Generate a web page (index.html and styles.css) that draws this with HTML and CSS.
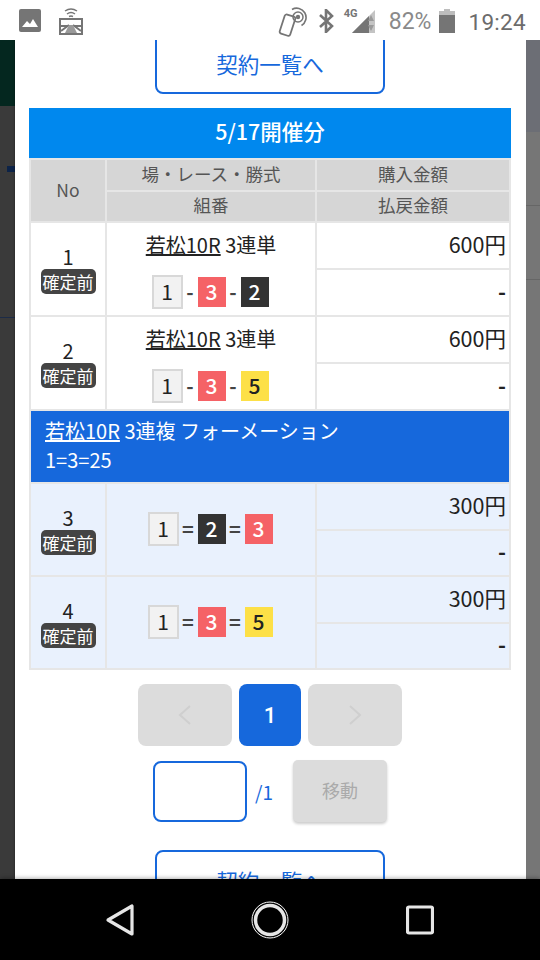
FILE: index.html
```html
<html>
    <head>
        <meta name="viewport" content="width=device-width, initial-scale=1">
        <title>契約一覧</title>
        <link rel="stylesheet" href="styles.css">
    </head>
    <body>
        <div class="screen">
            <div class="status-bar">
                <svg class="ic-picture" width="22" height="23" viewBox="0 0 22 23">
                    <rect width="22" height="23" rx="2" fill="#757575"/>
                    <path d="M3 18l5-6 3 3 3-5 5 8z" fill="#fff"/>
                </svg>
                <svg class="ic-cast" width="24" height="28" viewBox="0 0 24 28">
                    <path d="M6 4q6-4 12 0M8 7q4-3 8 0M10 9.500q2-1 4 0" fill="none" stroke="#757575" stroke-width="1.500"/>
                    <rect x="1" y="12" width="22" height="15" fill="#fff" stroke="#757575" stroke-width="2"/>
                    <path d="M2 24l8-6M22 24l-8-6M2 19h8M22 19h-8" stroke="#757575" stroke-width="2" fill="none"/>
                    <path d="M10 18h4l4 8H6z" fill="#9a9a9a"/>
                </svg>
                <div class="status-right">
                    <svg class="ic-nfc" width="30" height="30" viewBox="0 0 30 30">
                        <rect x="4" y="8" width="11" height="20" rx="2" transform="rotate(18 9 18)" fill="#fff" stroke="#757575" stroke-width="1.800"/>
                        <circle cx="20" cy="10" r="2.200" fill="#757575"/>
                        <circle cx="20" cy="10" r="5" fill="none" stroke="#757575" stroke-width="1.500"/>
                        <path d="M14 2.500a9 9 0 0 1 9.500 16" fill="none" stroke="#757575" stroke-width="1.600"/>
                    </svg>
                    <svg class="ic-bt" width="15" height="24" viewBox="0 0 15 24">
                        <path d="M1 6l12 11-6 6V1l6 6L1 18" fill="none" stroke="#757575" stroke-width="2.600"/>
                    </svg>
                    <div class="signal">
                        <span class="net">4G</span>
                        <svg width="31" height="24" viewBox="0 0 31 24">
                            <path d="M8 24L31 1v23z" fill="#c4c4c4"/>
                            <path d="M8 24l17-17v17z" fill="#757575"/>
                            <path d="M27 6l3 6h-6zM27 22l3-6h-6z" fill="#9a9a9a"/>
                        </svg>
                    </div>
                    <span class="battery-text">82%</span>
                    <svg class="ic-battery" width="16" height="24" viewBox="0 0 16 24">
                        <path d="M5 0h6v2h5v6H0V2h5z" fill="#bdbdbd"/>
                        <rect y="6" width="16" height="18" fill="#757575"/>
                    </svg>
                    <span class="clock">19:24</span>
                </div>
            </div>

            <div class="main">
                <div class="side side-left">
                    <div class="left-top"></div>
                    <div class="left-mid"><div class="left-mark"></div></div>
                </div>

                <div class="modal">
                    <div class="list-link-box"><a class="list-link">契約一覧へ</a></div>
                    <div class="date-title">5/17開催分</div>
                    <table class="bet-table">
                        <colgroup>
                            <col class="col-no">
                            <col class="col-bet">
                            <col class="col-money">
                        </colgroup>
                        <tr class="head-row">
                            <th rowspan="2">No</th>
                            <th>場・レース・勝式</th>
                            <th>購入金額</th>
                        </tr>
                        <tr class="head-row">
                            <th>組番</th>
                            <th>払戻金額</th>
                        </tr>

                        <tr class="money-row">
                            <td rowspan="2" class="no-cell">1<span class="badge">確定前</span></td>
                            <td rowspan="2" class="bet-cell">
                                <div class="race-name"><u>若松10R</u> 3連単</div>
                                <div class="numbers">
                                    <span class="num num-white">1</span><span class="sep">-</span><span class="num num-red">3</span><span class="sep">-</span><span class="num num-black">2</span>
                                </div>
                            </td>
                            <td class="money">600円</td>
                        </tr>
                        <tr class="money-row"><td class="money money-empty">-</td></tr>

                        <tr class="money-row">
                            <td rowspan="2" class="no-cell">2<span class="badge">確定前</span></td>
                            <td rowspan="2" class="bet-cell">
                                <div class="race-name"><u>若松10R</u> 3連単</div>
                                <div class="numbers">
                                    <span class="num num-white">1</span><span class="sep">-</span><span class="num num-red">3</span><span class="sep">-</span><span class="num num-yellow">5</span>
                                </div>
                            </td>
                            <td class="money">600円</td>
                        </tr>
                        <tr class="money-row"><td class="money money-empty">-</td></tr>

                        <tr>
                            <td colspan="3" class="formation"><u>若松10R</u> 3連複 フォーメーション<br>1=3=25</td>
                        </tr>

                        <tr class="money-row blue-row">
                            <td rowspan="2" class="no-cell">3<span class="badge">確定前</span></td>
                            <td rowspan="2" class="bet-cell">
                                <div class="numbers numbers-eq">
                                    <span class="num num-white">1</span><span class="sep">=</span><span class="num num-black">2</span><span class="sep">=</span><span class="num num-red">3</span>
                                </div>
                            </td>
                            <td class="money">300円</td>
                        </tr>
                        <tr class="money-row blue-row"><td class="money money-empty">-</td></tr>

                        <tr class="money-row blue-row">
                            <td rowspan="2" class="no-cell">4<span class="badge">確定前</span></td>
                            <td rowspan="2" class="bet-cell">
                                <div class="numbers numbers-eq">
                                    <span class="num num-white">1</span><span class="sep">=</span><span class="num num-red">3</span><span class="sep">=</span><span class="num num-yellow">5</span>
                                </div>
                            </td>
                            <td class="money">300円</td>
                        </tr>
                        <tr class="money-row blue-row"><td class="money money-empty">-</td></tr>
                    </table>

                    <div class="pager">
                        <div class="page-arrow">
                            <svg width="16" height="22" viewBox="0 0 16 22"><path d="M13 2L3 11l10 9" fill="none" stroke="#cfcfcf" stroke-width="2"/></svg>
                        </div>
                        <div class="page-current">1</div>
                        <div class="page-arrow">
                            <svg width="16" height="22" viewBox="0 0 16 22"><path d="M3 2l10 9-10 9" fill="none" stroke="#cfcfcf" stroke-width="2"/></svg>
                        </div>
                    </div>

                    <div class="page-jump">
                        <div class="page-input"></div>
                        <span class="page-total">/1</span>
                        <div class="move-button">移動</div>
                    </div>

                    <div class="list-link-box list-link-bottom"><a class="list-link">契約一覧へ</a></div>
                </div>

                <div class="side side-right">
                    <div class="right-a"></div>
                    <div class="right-b"></div>
                    <div class="right-c"></div>
                </div>
            </div>

            <div class="nav-bar">
                <div class="nav-item">
                    <svg width="30" height="34" viewBox="0 0 30 34"><path d="M3 17L27 3v28z" fill="none" stroke="#e6e6e6" stroke-width="3.200" stroke-linejoin="round"/></svg>
                </div>
                <div class="nav-item">
                    <svg width="38" height="38" viewBox="0 0 38 38">
                        <circle cx="19" cy="19" r="14.500" fill="none" stroke="#e6e6e6" stroke-width="3.500"/>
                        <circle cx="19" cy="19" r="18" fill="none" stroke="#fff" stroke-width="1"/>
                    </svg>
                </div>
                <div class="nav-item">
                    <svg width="28" height="30" viewBox="0 0 28 30"><rect x="1.500" y="2" width="25" height="26" rx="1.500" fill="none" stroke="#e6e6e6" stroke-width="3.200"/></svg>
                </div>
            </div>
        </div>
    </body>
</html>
```

FILE: styles.css
```css
* {
    box-sizing: border-box;
}
body {
    margin: 0;
    font-family: "Noto Sans CJK JP", "Noto Sans", sans-serif;
    color: #222;
}
.screen {
    width: 540px;
    height: 960px;
    display: flex;
    flex-direction: column;
    overflow: hidden;
}

/* status bar */
.status-bar {
    height: 40px;
    flex: none;
    display: flex;
    align-items: flex-start;
    padding: 9px 14px 0 19px;
    background: #fff;
    font-family: Roboto, sans-serif;
    color: #757575;
}
.ic-cast {
    margin-left: 18px;
    margin-top: -2px;
}
.status-right {
    margin-left: auto;
    display: flex;
    align-items: flex-start;
}
.ic-nfc {
    margin-top: -2px;
}
.ic-bt {
    margin-left: 11px;
}
.signal {
    margin-left: 10px;
    position: relative;
    width: 31px;
    height: 24px;
}
.net {
    position: absolute;
    left: 0;
    top: -2px;
    font-size: 11px;
    font-weight: 700;
}
.battery-text {
    margin-left: 14px;
    font-size: 23px;
    line-height: 26px;
    color: #8a8a8a;
}
.ic-battery {
    margin-left: 8px;
}
.clock {
    margin-left: 13px;
    font-size: 22.500px;
    line-height: 26px;
    color: #6c6c6c;
    letter-spacing: .3px;
}

/* backdrop and modal */
.main {
    flex: 1;
    min-height: 0;
    display: flex;
    overflow: hidden;
}
.side {
    flex: none;
}
.side-left {
    width: 15px;
    background: #3a3a3a;
}
.left-top {
    height: 66px;
    background: #04271f;
}
.left-mid {
    height: 212px;
    padding: 60px 0 0 7px;
    border-bottom: 1px solid #1c2b47;
}
.left-mark {
    height: 6px;
    background: #0c2348;
}
.side-right {
    width: 14px;
    background: #767676;
}
.right-a {
    height: 92px;
    background: #6c6e75;
}
.right-b,
.right-c {
    height: 74px;
    border-bottom: 1px solid #666;
}
.modal {
    width: 511px;
    flex: none;
    background: #fff;
    padding: 0 15px 0 14px;
    box-shadow: 0 0 2px rgba(0, 0, 0, .5);
}
.list-link-box {
    display: flex;
    justify-content: center;
    margin-top: -7px;
}
.list-link {
    width: 230px;
    height: 61px;
    display: flex;
    align-items: center;
    justify-content: center;
    border: 2px solid #1668dc;
    border-radius: 8px;
    color: #1668dc;
    font-size: 21.500px;
}
.list-link-bottom {
    margin-top: 28px;
}
.date-title {
    margin-top: 14px;
    height: 50px;
    line-height: 46px;
    background: #0088ee;
    color: #fff;
    text-align: center;
    font-size: 21.500px;
    font-weight: 500;
}

/* table */
.bet-table {
    width: 482px;
    table-layout: fixed;
    border-collapse: collapse;
    font-size: 20px;
}
.col-no {
    width: 76px;
}
.col-bet {
    width: 210px;
}
.bet-table th,
.bet-table td {
    border: 2px solid #e6e6e6;
    padding: 0;
}
.bet-table th {
    background: #d6d6d6;
    color: #555;
    font-weight: 400;
    font-size: 17.500px;
    height: 31.500px;
    line-height: 20px;
    padding-bottom: 2px;
}
.money-row {
    height: 47px;
}
.blue-row {
    height: 46.500px;
    background: #e9f1fd;
}
.no-cell {
    text-align: center;
    font-size: 20px;
    line-height: 25px;
}
.badge {
    display: block;
    width: 55px;
    margin: 0 auto;
    background: #444;
    color: #fff;
    border-radius: 5px;
    font-size: 17px;
    line-height: 25px;
}
.bet-cell {
    text-align: center;
}
.race-name {
    line-height: 30px;
}
.numbers {
    margin-top: 15px;
    padding-right: 2px;
    display: flex;
    align-items: center;
    justify-content: center;
}
.numbers-eq {
    margin-top: -2px;
}
.num {
    width: 28px;
    height: 30px;
    line-height: 29px;
    font-size: 21px;
    font-weight: 500;
    color: #fff;
}
.num-white {
    width: 31px;
    height: 34px;
    line-height: 29px;
    background: #f2f2f2;
    border: 2px solid #d8d8d8;
    color: #222;
    font-weight: 400;
}
.num-red {
    background: #f56266;
}
.num-black {
    background: #333;
}
.num-yellow {
    background: #fde047;
    color: #222;
}
.sep {
    width: 15px;
    text-align: center;
    color: #444;
    font-weight: 700;
}
.numbers-eq .sep {
    width: 19px;
}
.bet-table .money {
    text-align: right;
    padding: 0 3px 4px 0;
    font-size: 21.500px;
}
.bet-table .money-empty {
    font-weight: 700;
}
.bet-table .formation {
    height: 73px;
    padding: 0 0 3px 14px;
    background: #1668dc;
    color: #fff;
    line-height: 29px;
}

/* pager */
.pager {
    margin-top: 14px;
    display: flex;
    justify-content: center;
    gap: 7px;
}
.page-arrow,
.page-current {
    height: 62px;
    border-radius: 8px;
    display: flex;
    align-items: center;
    justify-content: center;
}
.page-arrow {
    width: 94px;
    background: #dcdcdc;
}
.page-current {
    width: 62px;
    background: #1668dc;
    color: #fff;
    font-family: Roboto, sans-serif;
    font-size: 22px;
    font-weight: 500;
}
.page-jump {
    margin-top: 14px;
    display: flex;
    align-items: center;
    padding-left: 124px;
}
.page-input {
    width: 94px;
    height: 61px;
    border: 2px solid #1668dc;
    border-radius: 8px;
}
.page-total {
    width: 46px;
    padding-left: 8px;
    color: #1668dc;
    font-size: 19px;
}
.move-button {
    width: 94px;
    height: 62px;
    line-height: 60px;
    text-align: center;
    background: #dcdcdc;
    border-radius: 5px;
    color: #aaa;
    font-size: 18px;
    box-shadow: 0 2px 3px rgba(0, 0, 0, .2);
}

/* bottom nav */
.nav-bar {
    height: 81px;
    flex: none;
    position: relative;
    display: flex;
    padding: 0 45px;
    background: #000;
    box-shadow: 0 -1px 4px rgba(0, 0, 0, .3);
}
.nav-item {
    width: 150px;
    display: flex;
    align-items: center;
    justify-content: center;
}
```
